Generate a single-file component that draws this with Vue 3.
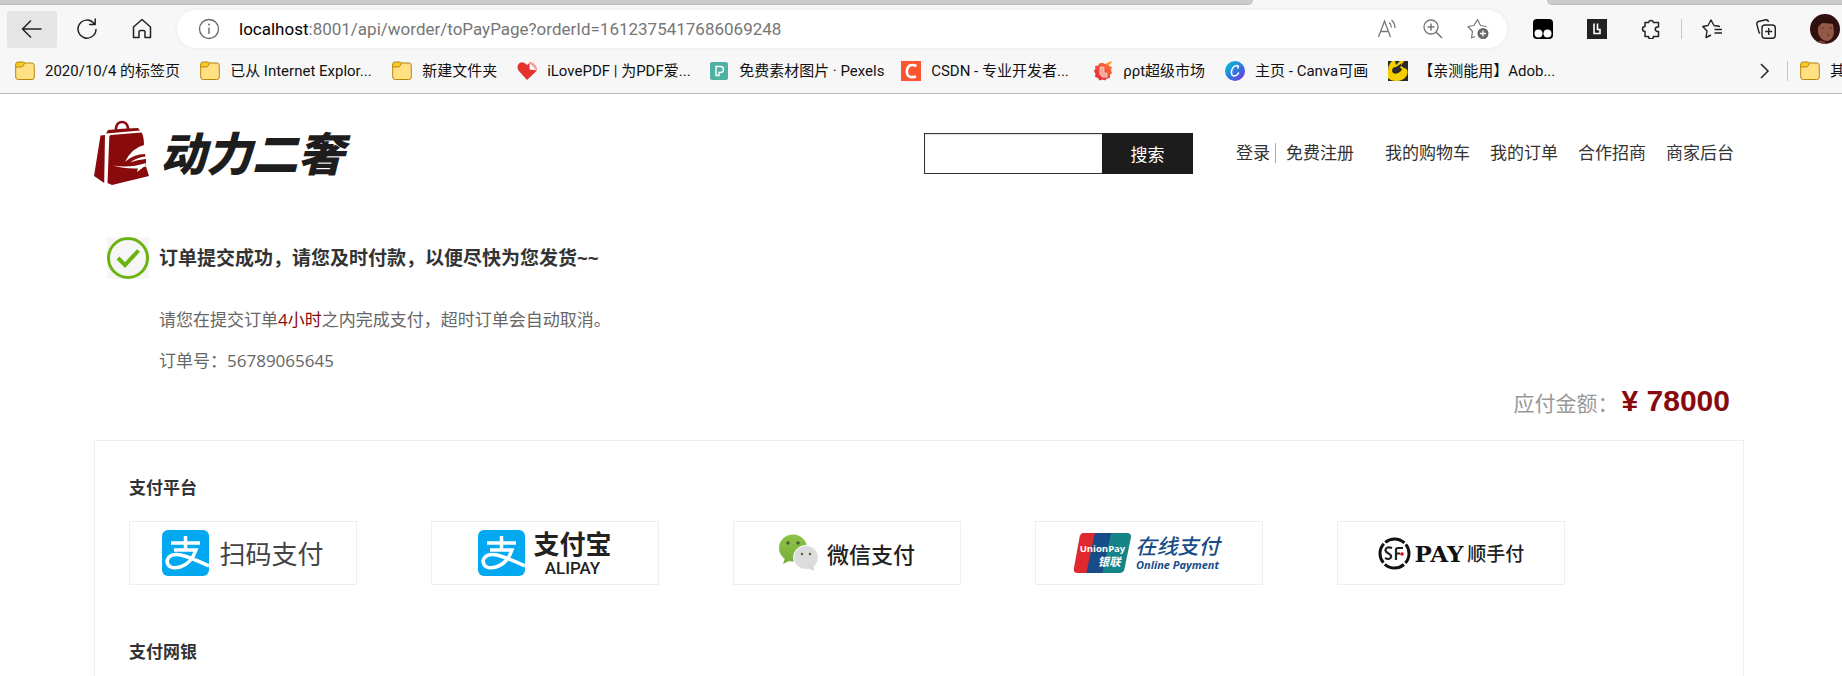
<script setup>
const bookmarks = [
  { icon: 'folder', text: '2020/10/4 的标签页', size: 'auto' },
  { icon: 'folder', text: '已从 Internet Explor...', size: 'full' },
  { icon: 'folder', text: '新建文件夹', size: 'auto' },
  { icon: 'heart', text: 'iLovePDF | 为PDF爱...', size: 'full' },
  { icon: 'pexels', text: '免费素材图片 · Pexels', size: 'full' },
  { icon: 'csdn', text: 'CSDN - 专业开发者...', size: 'full' },
  { icon: 'ppt', text: 'ρρt超级市场', size: 'auto' },
  { icon: 'canva', text: '主页 - Canva可画', size: 'auto' },
  { icon: 'adobe', text: '【亲测能用】Adob...', size: 'full' }
]
const account = ['登录', '免费注册']
const links = ['我的购物车', '我的订单', '合作招商', '商家后台']
</script>

<template>
  <div class="window">
    <header class="browser">
      <div class="tabs"><div class="tab-left"></div><div class="tab-right"></div></div>
      <div class="toolbar">
        <div class="nav-buttons">
          <button class="tool back" aria-label="返回">
            <svg width="22" height="22" viewBox="0 0 22 22"><path d="M20.500 11H1.500M10 2.500 1.500 11l8.500 8.500" fill="none" stroke="#222" stroke-width="1.500" /></svg>
          </button>
          <button class="tool" aria-label="刷新">
            <svg width="22" height="22" viewBox="0 0 22 22"><path d="M20 11.500A9 9 0 1 1 17.800 5.200M19.200 1v5.500h-5.500" fill="none" stroke="#222" stroke-width="1.500" stroke-linecap="round" stroke-linejoin="round" /></svg>
          </button>
          <button class="tool" aria-label="主页">
            <svg width="22" height="22" viewBox="0 0 22 22"><path d="M2.500 9 11 1.500 19.500 9v10.500h-5.500v-5.500q0-1.500-1.500-1.500h-3q-1.500 0-1.500 1.500v5.500H2.500z" fill="none" stroke="#222" stroke-width="1.500" stroke-linejoin="round" /></svg>
          </button>
        </div>
        <div class="address">
          <svg width="22" height="22" viewBox="0 0 22 22"><circle cx="11" cy="11" r="9.500" fill="none" stroke="#666" stroke-width="1.300" /><path d="M11 9.500v6.500" stroke="#666" stroke-width="1.400" /><circle cx="11" cy="6.500" r="1" fill="#666" /></svg>
          <div class="url" role="textbox" contenteditable="true" spellcheck="false" aria-label="地址栏"><span class="host">localhost</span>:8001/api/worder/toPayPage?orderId=1612375417686069248</div>
          <div class="address-tools">
            <button class="mini" aria-label="大声朗读">
              <svg width="22" height="22" viewBox="0 0 22 22"><path d="M1.500 19 7.500 3 13.500 19M3.500 13.500h8M12 4.500q2.500 2 2.500 5M14.500 2q3.500 3 3.500 8" fill="none" stroke="#777" stroke-width="1.300" /></svg>
            </button>
            <button class="mini" aria-label="缩放">
              <svg width="22" height="22" viewBox="0 0 22 22"><circle cx="9" cy="9" r="7" fill="none" stroke="#777" stroke-width="1.300" /><path d="M9 5.500v7M5.500 9h7M14 14l6 6" stroke="#777" stroke-width="1.500" /></svg>
            </button>
            <button class="mini" aria-label="收藏此页">
              <svg width="22" height="22" viewBox="0 0 22 22"><path d="M8 18.500 4.500 20l1-6.500L1 8.500l6-1L10.500 1.500l3 6 6 1" fill="none" stroke="#777" stroke-width="1.200" stroke-linejoin="round" /><circle cx="16" cy="15.500" r="5.500" fill="#666" /><path d="M16 12.500v6M13 15.500h6" stroke="#fff" stroke-width="1.300" /></svg>
            </button>
          </div>
        </div>
        <div class="extensions">
          <button class="mini" aria-label="Tampermonkey">
            <svg width="20" height="20" viewBox="0 0 20 20"><rect width="20" height="20" rx="4" fill="#000" /><circle cx="5.500" cy="14.500" r="4" fill="#fff" /><circle cx="14.500" cy="14.500" r="4" fill="#fff" /></svg>
          </button>
          <button class="mini" aria-label="扩展">
            <svg width="20" height="20" viewBox="0 0 20 20"><path d="M0 0h20v20H0z" fill="#222" /><path d="M7 4.500v10h6v-4h-2.500v-6" fill="none" stroke="#fff" stroke-width="1.600" /></svg>
          </button>
          <button class="mini" aria-label="管理扩展">
            <svg width="20" height="20" viewBox="0 0 20 20"><path d="M4 3.500h3.500a2.600 2.600 0 0 1 5 0H17.500V8h-1a2 2 0 0 0 0 4.500h1V17.500h-5a2.500 2.500 0 0 1-5 0H4v-5a2.500 2.500 0 0 1 0-5z" fill="none" stroke="#222" stroke-width="1.500" stroke-linejoin="round" /></svg>
          </button>
        </div>
        <div class="rule"></div>
        <div class="extensions">
          <button class="mini" aria-label="收藏夹">
            <svg width="20" height="20" viewBox="0 0 20 20"><path d="M18 7.500 12 6.500 9 1 6 6.500.800 7.500 5 12 4 18.500 9 16M12.500 10.500h7.500M12.500 14h7.500" fill="none" stroke="#222" stroke-width="1.400" stroke-linejoin="round" /></svg>
          </button>
          <button class="mini" aria-label="集锦">
            <svg width="20" height="20" viewBox="0 0 20 20"><path d="M4 14.500 3 13.500.800 5Q.500 3 2.500 2.500L10 .700Q12 .500 12.500 3" fill="none" stroke="#222" stroke-width="1.400" /><rect x="6" y="6" width="13.300" height="13.300" rx="3" fill="none" stroke="#222" stroke-width="1.400" /><path d="M12.700 9v7M9.200 12.500h7" stroke="#222" stroke-width="1.400" /></svg>
          </button>
          <button class="mini" aria-label="个人资料">
            <svg width="30" height="30" viewBox="0 0 30 30"><defs><clipPath id="face"><circle cx="15" cy="15" r="15" /></clipPath></defs><g clip-path="url(#face)"><path d="M0 0h30v30H0z" fill="#30110f" /><path d="M8 9q7-4 15 0l1 10q-2 8-7 8-6 0-9-8z" fill="#925947" /><path d="M6 15Q7 6 15 4q9 0 11 12l-3-6q-7-1-11-1z" fill="#2b1010" /><path d="M11 14h3M19 14h3M17 21h3" stroke="#6b3329" stroke-width="1.200" /><path d="M5 30q4-5 8-3l5 3z" fill="#79402f" /></g></svg>
          </button>
        </div>
      </div>
      <nav class="bookmarks" aria-label="书签栏">
        <a v-for="item in bookmarks" :key="item.text" href="#" class="bookmark" :class="item.size">
          <svg class="favicon" width="20" height="20" viewBox="0 0 20 20">
            <g v-if="item.icon === 'folder'" stroke="#b8860b"><rect x=".700" y="2" width="18.600" height="16.500" rx="2.500" fill="#ffe083" /><path d="M.700 5.500v-2Q.700 1 3 1h4.500q1.500 0 2 1.500L8 5q-.500 1-2 1H.700z" fill="#f8c927" /></g>
            <g v-else-if="item.icon === 'heart'"><path d="M10 19 1.500 9.500Q-1 5 2.500 2 6.500 0 10 4l3.500-3 6 6v3z" fill="#e5322d" /><path d="M12 2.500q3-2 5 0l2.500 3v4l-7-1z" fill="#f5a3a0" /><path d="M13 2.500 19 9l-6-.500z" fill="#fff" /></g>
            <g v-else-if="item.icon === 'pexels'"><rect x="1" y="1" width="18" height="18" rx="2" fill="#50b0a2" /><path d="M7 14.500v-9h4.500a3 3 0 0 1 0 6H10v3z" fill="none" stroke="#fff" stroke-width="1.400" /></g>
            <g v-else-if="item.icon === 'csdn'"><path d="M0 0h20v20H0z" fill="#fc5531" /><path d="M15.500 5Q7 1.500 5.800 10q0 8 9.200 5.500" fill="none" stroke="#fff" stroke-width="2.600" /></g>
            <g v-else-if="item.icon === 'ppt'"><defs><linearGradient id="ppt" x1="0" y1="1" x2="1" y2="0"><stop offset="0" stop-color="#e8203f" /><stop offset="1" stop-color="#fb7b35" /></linearGradient></defs><path d="m10 2 2 1 3-1 1 3 3 1-1 3 1 3-2 2v3l-3 .500-2 2-2.500-1-3 1-1.500-2.500-3-1 .500-3L1 10l1.500-2.500L2 5l3-.500L7 2z" fill="url(#ppt)" /><path d="M13 3.500q2-3 6-3.500-1 4-4 4z" fill="#fb9b28" /><path d="M7 6v8h2v2h5v-4h-3V6z" fill="#f9a394" stroke="#fcd0c8" stroke-width=".800" /></g>
            <g v-else-if="item.icon === 'canva'"><defs><linearGradient id="canva" x1="0" y1="0" x2="1" y2="1"><stop offset="0" stop-color="#00c9cc" /><stop offset=".500" stop-color="#2b7de0" /><stop offset="1" stop-color="#7d2ae8" /></linearGradient></defs><circle cx="10" cy="10" r="10" fill="url(#canva)" /><path d="M13 7q1-2-1-2.500Q8 4.500 6.500 10q-.500 5 2.500 5 3 0 4.500-3" fill="none" stroke="#fff" stroke-width="1.600" stroke-linecap="round" /></g>
            <g v-else><path d="M0 0h20v20H0z" fill="#292929" /><path d="M4 0Q0 4 0 10v7q3 3 8 3 8 0 11-6 2-6-3-7l-3-2L16 0h-4L8 4 7 0z" fill="#f5d000" /><path d="M4 10q0-4 4-4l6-4-2 5q3 0 1 3-4 4-8 2z" fill="#292929" /></g>
          </svg>
          <span>{{ item.text }}</span>
        </a>
        <button class="mini more" aria-label="更多书签">
          <svg width="10" height="18" viewBox="0 0 10 18"><path d="M1 2l7 7-7 7" fill="none" stroke="#222" stroke-width="1.500" /></svg>
        </button>
        <div class="rule"></div>
        <a href="#" class="bookmark other">
          <svg class="favicon" width="20" height="20" viewBox="0 0 20 20"><g stroke="#b8860b"><rect x=".700" y="2" width="18.600" height="16.500" rx="2.500" fill="#ffe083" /><path d="M.700 5.500v-2Q.700 1 3 1h4.500q1.500 0 2 1.500L8 5q-.500 1-2 1H.700z" fill="#f8c927" /></g></svg>
          <span>其他收藏夹</span>
        </a>
      </nav>
    </header>

    <main class="page">
      <div class="masthead">
        <a href="#" class="brand">
          <svg width="56" height="66" viewBox="0 0 56 66" fill="#890a0c">
            <path d="M6.500 15.500 11 15l-.800 48L0 56z" />
            <path d="M15.300 16.700Q15.500 15 17 15l30.700-2.500Q50 17 50 25 38 28 31 41.700 40 34 51 34l.500 2.500Q44 37 36 42.500 43 39.500 52 39v6l-3 2 3-.500 3 9.500-37 9-4.500-2z" />
            <path d="M19 45.500q16 3 33-2.500l-1 3-8 6 1-3.500Q30 49 19 45.500z" fill="#fff" />
            <path d="M14 10q14-1.500 30-2l2 2.500-34 3z" />
            <path d="M22 11V8q1-6 6-6t6 6v3" fill="none" stroke="#890a0c" stroke-width="2.500" />
          </svg>
          <span class="brand-name">动力二奢</span>
        </a>
        <div class="site-tools">
          <form class="search" @submit.prevent>
            <input type="text" aria-label="搜索关键字" />
            <button type="submit">搜索</button>
          </form>
          <nav class="account" aria-label="账户">
            <a v-for="name in account" :key="name" href="#">{{ name }}</a>
          </nav>
          <nav class="links" aria-label="站点">
            <a v-for="name in links" :key="name" href="#">{{ name }}</a>
          </nav>
        </div>
      </div>

      <section class="result">
        <div class="success">
          <svg width="42" height="42" viewBox="0 0 42 42"><path d="M0 0h42v42H0z" fill="#f5f5f5" /><circle cx="21" cy="21" r="19.500" fill="#f6f6f6" stroke="#6cb312" stroke-width="3" /><path d="m11 21 7 7L31.500 13.500" fill="none" stroke="#6cb312" stroke-width="4" /></svg>
          <h1>订单提交成功，请您及时付款，以便尽快为您发货~~</h1>
        </div>
        <div class="details">
          <p>请您在提交订单<em>4小时</em>之内完成支付，超时订单会自动取消。</p>
          <p>订单号：56789065645</p>
        </div>
        <div class="amount"><span>应付金额：</span><strong>¥ 78000</strong></div>
      </section>

      <section class="card">
        <h2>支付平台</h2>
        <div class="options">
          <button class="option scan">
            <svg width="47" height="46" viewBox="0 0 47 46"><rect width="47" height="46" rx="6" fill="#02a9f1" /><path d="M9 13h29M23.500 6v13M12 20h22Q29 34 18 37 6 40 5 31q2-8 14-6 11 3 28 11" fill="none" stroke="#fff" stroke-width="3.500" /></svg>
            <span>扫码支付</span>
          </button>
          <button class="option alipay">
            <svg width="47" height="46" viewBox="0 0 47 46"><rect width="47" height="46" rx="6" fill="#02a9f1" /><path d="M9 13h29M23.500 6v13M12 20h22Q29 34 18 37 6 40 5 31q2-8 14-6 11 3 28 11" fill="none" stroke="#fff" stroke-width="3.500" /></svg>
            <span class="stack"><b>支付宝</b><i>ALIPAY</i></span>
          </button>
          <button class="option wechat">
            <svg width="40" height="38" viewBox="0 0 40 38"><defs><linearGradient id="bubble" x1="0" y1="0" x2="0" y2="1"><stop offset="0" stop-color="#8cc445" /><stop offset="1" stop-color="#79ae3d" /></linearGradient></defs><ellipse cx="14" cy="14" rx="14" ry="13.500" fill="url(#bubble)" /><path d="m6 24-2 6 8-4z" fill="#79ae3d" /><ellipse cx="27" cy="23.500" rx="12.500" ry="12" fill="#dcdcdc" stroke="#fff" /><path d="m29 34 6 3-1-6z" fill="#d5d5d5" /><g fill="#4c5b36"><circle cx="9" cy="9" r="1.700" /><circle cx="19" cy="9" r="1.700" /><circle cx="23" cy="20" r="1.200" /><circle cx="31" cy="20" r="1.200" /></g></svg>
            <span>微信支付</span>
          </button>
          <button class="option union">
            <svg width="59" height="40" viewBox="0 0 60 42"><path d="M10 0h15l-9 42H4q-5 0-4-5L6 4q1-4 4-4z" fill="#df292e" /><path d="M22 0h20l-9 42H13z" fill="#174c89" /><path d="M39 0h17q4 0 4 4l-7 34q-1 4-5 4H30z" fill="#158487" /><text x="6" y="20" class="union-en">UnionPay</text><text x="25" y="35" class="union-cn">银联</text></svg>
            <span class="stack"><b>在线支付</b><i>Online Payment</i></span>
          </button>
          <button class="option sf">
            <svg width="33" height="33" viewBox="0 0 33 33"><circle cx="16.500" cy="16.500" r="14.500" fill="none" stroke="#111" stroke-width="3" stroke-dasharray="20.800 1.977" stroke-dashoffset="-12.400" /><path d="M14 11q-6-2-6.500 2 0 2 3 3.500 4 2 2 4.500-2 2-5.500 0M18 23V13q0-2 2-2h5M18 16.500h4" fill="none" stroke="#222" stroke-width="2.200" /><circle cx="24" cy="17" r="1.800" fill="#e60012" /></svg>
            <b>PAY</b><span>顺手付</span>
          </button>
        </div>
        <h2 class="bank">支付网银</h2>
      </section>
    </main>
  </div>
</template>

<style>
body {
  margin: 0;
  overflow: hidden;
  background: #fff;
}
</style>

<style scoped>
* {
  box-sizing: border-box;
}
.window {
  height: 100vh;
  overflow: hidden;
  font-family: "Open Sans", "Noto Sans CJK SC", sans-serif;
  color: #333;
}
button {
  font-family: inherit;
  padding: 0;
  border: 0;
  background: none;
  cursor: pointer;
}
a {
  color: inherit;
  text-decoration: none;
}
svg {
  display: block;
  flex: none;
}
.browser {
  background: #f7f7f7;
  border-bottom: 1px solid #b9b9b9;
  font-family: Roboto, "Noto Sans CJK SC", sans-serif;
}
.tabs {
  display: flex;
  justify-content: space-between;
  height: 5px;
}
.tab-left,
.tab-right {
  background: #cbcbcb;
  border-bottom: 1px solid #bdbdbd;
}
.tab-left {
  flex: 0 0 68%;
  border-bottom-right-radius: 5px;
}
.tab-right {
  flex: 0 0 16%;
  border-bottom-left-radius: 5px;
}
.toolbar {
  display: flex;
  align-items: center;
  height: 48px;
  padding: 0 2px 0 7px;
}
.nav-buttons {
  display: flex;
  gap: 5px;
  margin-right: 10px;
}
.tool {
  display: flex;
  align-items: center;
  justify-content: center;
  width: 50px;
  height: 37px;
  border-radius: 2px;
}
.back {
  background: #e5e5e5;
}
.address {
  flex: 1;
  display: flex;
  align-items: center;
  height: 38px;
  padding: 0 18px 0 21px;
  border-radius: 19px;
  background: #fff;
  box-shadow: 0 0 4px #e8e8e8;
}
.url {
  flex: 1;
  margin-left: 19px;
  font-size: 17px;
  line-height: 24px;
  color: #767676;
  white-space: nowrap;
  outline: 0;
}
.host {
  color: #000;
}
.address-tools {
  display: flex;
  gap: 23px;
}
.extensions {
  display: flex;
  align-items: center;
  gap: 34px;
}
.address + .extensions {
  margin-left: 26px;
}
.rule {
  width: 1px;
  height: 20px;
  margin: 0 20px;
  background: #c8c8c8;
}
.bookmarks {
  display: flex;
  align-items: center;
  height: 40px;
  padding: 0 0 4px 15px;
  overflow: hidden;
  font-size: 15px;
  line-height: 20px;
  color: #111;
}
.bookmarks .rule {
  margin: 0 12px 0 17px;
}
.bookmark {
  display: flex;
  flex: none;
  align-items: center;
  gap: 10px;
  margin-right: 20px;
  white-space: nowrap;
}
.full {
  width: 172px;
}
.more {
  margin-left: auto;
}
.other {
  width: 42px;
  margin-right: 0;
  overflow: hidden;
}
.page {
  padding: 0 98px 0 94px;
}
.masthead {
  display: flex;
  align-items: center;
  justify-content: space-between;
  height: 118px;
  padding-right: 10px;
}
.brand {
  display: flex;
  align-items: center;
  gap: 10px;
}
.brand-name {
  font-size: 46px;
  font-style: italic;
  font-weight: 900;
  line-height: 56px;
  color: #1d1d1d;
}
.site-tools {
  display: flex;
  align-items: center;
  font-size: 17px;
  line-height: 20px;
}
.search {
  display: flex;
  height: 41px;
  margin-right: 43px;
}
.search input {
  width: 178px;
  padding: 0 8px;
  border: 1px solid #333;
  border-right: 0;
  border-radius: 0;
  background: #fff;
  font: inherit;
  box-shadow: inset 0 1px 2px #ddd;
}
.search button {
  width: 91px;
  background: #1c1c1c;
  color: #fff;
  font-size: 17px;
}
.account {
  display: flex;
  margin-right: 31px;
}
.account a + a {
  margin-left: 5px;
  padding-left: 10px;
  border-left: 1px solid #aaa;
}
.links {
  display: flex;
  gap: 20px;
}
.result {
  padding-top: 25px;
}
.success {
  display: flex;
  align-items: center;
  gap: 10px;
  padding-left: 13px;
}
h1 {
  margin: 0;
  font-size: 19px;
  line-height: 28px;
}
.details {
  padding: 20px 0 0 65px;
  font-size: 17px;
  line-height: 41px;
  color: #666;
}
.details p {
  margin: 0;
}
.details em {
  font-style: normal;
  color: #890a0c;
}
.amount {
  display: flex;
  align-items: baseline;
  justify-content: flex-end;
  height: 59px;
  padding-right: 14px;
  line-height: 40px;
}
.amount span {
  margin-right: 3px;
  font-size: 21px;
  color: #999;
}
.amount strong {
  font-family: "Liberation Sans", Arial, sans-serif;
  font-size: 30px;
  color: #890a0c;
}
.card {
  min-height: 300px;
  padding: 34px 34px 0;
  border: 1px solid #eee;
}
h2 {
  margin: 0;
  font-size: 17px;
  line-height: 26px;
}
.options {
  display: grid;
  grid-template-columns: repeat(5, 228px);
  gap: 74px;
  margin: 20px 0 54px;
}
.option {
  display: flex;
  align-items: center;
  justify-content: center;
  height: 64px;
  border: 1px solid #eee;
  color: #222;
}
.scan {
  gap: 10px;
  color: #444;
  font-size: 26px;
}
.alipay {
  gap: 8px;
}
.stack {
  display: flex;
  flex-direction: column;
  align-items: center;
}
.stack i {
  font-style: normal;
}
.alipay b {
  font-size: 26px;
  line-height: 30px;
}
.alipay i {
  font-family: Roboto, sans-serif;
  font-size: 17px;
  font-weight: 500;
  line-height: 18px;
}
.wechat {
  gap: 8px;
  font-size: 22px;
  font-weight: 500;
}
.union {
  gap: 4px;
  padding-right: 6px;
  color: #174c89;
}
.union b {
  font-size: 21px;
  font-style: italic;
  font-weight: 500;
  line-height: 24px;
}
.union i {
  font-size: 11px;
  font-style: italic;
  font-weight: 700;
  line-height: 14px;
}
.union-en,
.union-cn {
  fill: #fff;
  font-weight: 700;
}
.union-en {
  font-size: 10px;
}
.union-cn {
  font-size: 12px;
  font-style: italic;
}
.sf {
  gap: 4px;
}
.sf b {
  font-family: "DejaVu Serif", serif;
  font-size: 23px;
  color: #111;
}
.sf span {
  font-size: 19px;
  font-weight: 500;
}
</style>
